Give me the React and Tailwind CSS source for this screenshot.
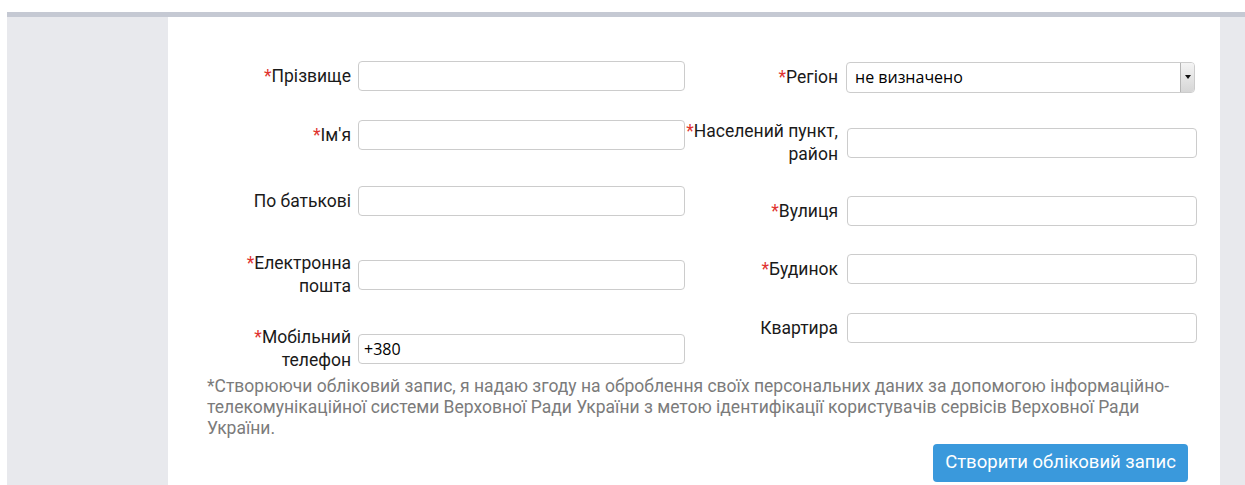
import React from "react";

const font = { fontFamily: "Roboto, 'Noto Sans', sans-serif" };

function Label({ children, required, className = "" }) {
  return (
    <div className={`text-right text-[17.5px] leading-[23px] text-[#1a1a1a] ${className}`}>
      {required && <span className="text-[#e0332f]">*</span>}
      {children}
    </div>
  );
}

function TextInput({ value = "", className = "" }) {
  return (
    <div
      className={`h-[30px] rounded-[4px] border border-[#cccccc] bg-white flex items-center px-[5px] text-[16px] text-black ${className}`}
      style={{ fontFamily: "'Open Sans', 'DejaVu Sans', sans-serif" }}
    >
      {value}
    </div>
  );
}

function LeftRow({ label, required, value, className = "" }) {
  return (
    <div className={`flex items-center h-[46px] ${className}`}>
      <Label required={required} className="w-[155px]">{label}</Label>
      <TextInput value={value} className="ml-[7px] w-[327px]" />
    </div>
  );
}

function RightRow({ label, required, className = "" }) {
  return (
    <div className={`flex items-center h-[46px] ${className}`}>
      <Label required={required} className="w-[153px]">{label}</Label>
      <TextInput className="ml-[9px] w-[350px]" />
    </div>
  );
}

function RegionSelect() {
  return (
    <div
      className="ml-[8px] w-[349px] h-[31px] rounded-[4px] border border-[#cccccc] bg-white flex items-stretch"
      style={{ fontFamily: "'Open Sans', 'DejaVu Sans', sans-serif" }}
    >
      <div className="flex-1 flex items-center pl-[8px] text-[16px] text-black">не визначено</div>
      <div className="w-[14px] rounded-r-[3px] border-l border-[#b5b5b5] bg-gradient-to-b from-[#f4f4f4] to-[#d6d6d6] flex items-center justify-center">
        <svg width="6" height="4" viewBox="0 0 6 4">
          <path d="M0 0h6L3 4z" fill="#111" />
        </svg>
      </div>
    </div>
  );
}

export default function App() {
  return (
    <div className="w-[1245px] h-[485px] bg-white overflow-hidden" style={font}>
      <div className="h-[12px]" />
      <div className="ml-[7px] h-[5px] bg-[#c5c9d3]" />
      <div className="ml-[7px] h-[468px] bg-[#e8e9ed] flex">
        <div className="ml-[161px] w-[1052px] h-full bg-white">
          <div className="flex pt-[36px]">
            {/* personal data */}
            <div className="w-[517px] pl-[28px] flex flex-col">
              <LeftRow label="Прізвище" required />
              <LeftRow label="Ім'я" required className="mt-[13px]" />
              <LeftRow label="По батькові" className="mt-[20px]" />
              <LeftRow
                label={<>Електронна<br />пошта</>}
                required
                className="mt-[28px]"
              />
              <LeftRow
                label={<>Мобільний<br />телефон</>}
                required
                value="+380"
                className="mt-[28px]"
              />
            </div>
            {/* address */}
            <div className="flex flex-col">
              <div className="flex items-center h-[46px] mt-[1px]">
                <Label required className="w-[153px]">Регіон</Label>
                <RegionSelect />
              </div>
              <RightRow
                label={<>Населений пункт,<br />район</>}
                required
                className="mt-[20px]"
              />
              <RightRow label="Вулиця" required className="mt-[22px]" />
              <RightRow label="Будинок" required className="mt-[12px]" />
              <RightRow label="Квартира" className="mt-[13px]" />
            </div>
          </div>
          <p className="mt-[4px] ml-[39px] w-[965px] text-[17.5px] leading-[21px] text-[#7b7b7b]">
            *Створюючи обліковий запис, я надаю згоду на оброблення своїх персональних даних за допомогою інформаційно-телекомунікаційної системи Верховної Ради України з метою ідентифікації користувачів сервісів Верховної Ради України.
          </p>
          <div className="flex justify-end pr-[32px] mt-[5px]">
            <button className="h-[38px] w-[255px] rounded-[4px] bg-[#3a99dc] text-white text-[18.5px] whitespace-nowrap">
              Створити обліковий запис
            </button>
          </div>
        </div>
      </div>
    </div>
  );
}
